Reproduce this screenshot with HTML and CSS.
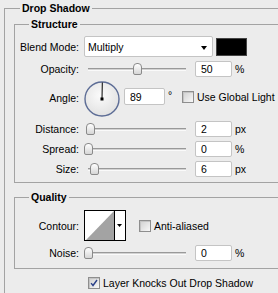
FILE: index.html
```html
<!DOCTYPE html>
<html lang="en">
<head>
  <meta charset="UTF-8"/>
  <meta name="viewport" content="width=device-width,initial-scale=1.0"/>
  <title>Drop Shadow</title>
  <link rel="stylesheet" href="styles.css">
</head>
<body>
  <fieldset class="group">
    <legend>Drop Shadow</legend>

    <fieldset class="box structure">
      <legend>Structure</legend>
      <div class="row tall">
        <span class="lbl">Blend Mode:</span>
        <div class="select">Multiply<span class="caret"></span></div>
        <span class="swatch"></span>
      </div>
      <div class="row">
        <span class="lbl">Opacity:</span>
        <div class="slider"><div class="track"></div><span class="thumb" style="left:49px"></span></div>
        <span class="field">50</span>
        <span class="unit">%</span>
      </div>
      <div class="row angle-row">
        <span class="lbl">Angle:</span>
        <svg class="dial" viewBox="0 0 36 36">
          <defs>
            <radialGradient id="face" cx="45%" cy="40%" r="60%">
              <stop offset="0" stop-color="#fbfbfb"/>
              <stop offset="1" stop-color="#e2e2e2"/>
            </radialGradient>
          </defs>
          <circle cx="18" cy="18" r="17" fill="url(#face)" stroke="#5d6d96" stroke-width="1.4"/>
          <line x1="18" y1="18" x2="18.3" y2="1.5" stroke="#000" stroke-width="1"/>
          <rect x="16.5" y="16.5" width="3" height="3" fill="#000"/>
        </svg>
        <span class="field wide">89</span>
        <span class="deg">°</span>
        <label class="check"><span class="cbox"></span>Use Global Light</label>
      </div>
      <div class="row">
        <span class="lbl">Distance:</span>
        <div class="slider"><div class="track"></div><span class="thumb" style="left:2px"></span></div>
        <span class="field">2</span>
        <span class="unit">px</span>
      </div>
      <div class="row">
        <span class="lbl">Spread:</span>
        <div class="slider"><div class="track"></div><span class="thumb" style="left:0px"></span></div>
        <span class="field">0</span>
        <span class="unit">%</span>
      </div>
      <div class="row">
        <span class="lbl">Size:</span>
        <div class="slider"><div class="track"></div><span class="thumb" style="left:6px"></span></div>
        <span class="field">6</span>
        <span class="unit">px</span>
      </div>
    </fieldset>

    <fieldset class="box quality">
      <legend>Quality</legend>
      <div class="row contour-row">
        <span class="lbl">Contour:</span>
        <svg class="contour" viewBox="0 0 42 31">
          <rect x="0.5" y="0.5" width="41" height="30" fill="#fff" stroke="#000"/>
          <polygon points="2,30 30,1 30,30" fill="#a3a3a3"/>
          <line x1="30.5" y1="0" x2="30.5" y2="31" stroke="#000"/>
          <polygon points="33,14 38,14 35.5,17" fill="#000"/>
        </svg>
        <label class="check aa"><span class="cbox"></span>Anti-aliased</label>
      </div>
      <div class="row">
        <span class="lbl">Noise:</span>
        <div class="slider"><div class="track"></div><span class="thumb" style="left:0px"></span></div>
        <span class="field">0</span>
        <span class="unit">%</span>
      </div>
    </fieldset>

    <label class="check knock">
      <span class="cbox">
        <svg viewBox="0 0 12 12"><path d="M2.5 6.2 L4.8 9 L9.6 2.4" fill="none" stroke="#2b4189" stroke-width="1.7"/></svg>
      </span>Layer Knocks Out Drop Shadow
    </label>
  </fieldset>
</body>
</html>
```

FILE: styles.css
```css
:root {
  --bg: #ececec;
  --line: #a3a3a3;
  --field-border: #c4c4c4;
}
* { box-sizing: border-box; }
body {
  margin: 0; padding: 2px 0 0 4px;
  background: var(--bg); color: #000;
  font: 10.5px 'Liberation Sans', Arial, sans-serif;
  overflow: hidden;
}

fieldset {
  margin: 0; padding: 0; min-width: 0;
  border: 1px solid var(--line);
  border-right: 0;
}
legend {
  padding: 0 2px;
  font-weight: bold;
  line-height: 12px;
}

.group { border-bottom: 0; padding: 0 0 10px 9px; }
.group > legend { margin-left: 6px; }

.box > legend { margin-left: 14px; }
.structure { margin-top: 4px; padding: 6px 0 5px; }
.quality { margin-top: 8px; padding: 7px 0 7px; }

.row {
  display: flex; align-items: center;
  height: 16px;
}
.row + .row { margin-top: 4px; }
.row.tall { height: 21px; }

.lbl {
  flex: none;
  width: 64px; margin-right: 5px;
  text-align: right;
  white-space: nowrap;
}

/* blend mode dropdown */
.select {
  position: relative;
  width: 129px; height: 21px;
  padding-left: 3px;
  display: flex; align-items: center;
  background: #fff;
  border: 1px solid var(--field-border);
  border-radius: 2px;
}
.caret {
  position: absolute; right: 5px; top: 9px;
  border-left: 3.5px solid transparent;
  border-right: 3.5px solid transparent;
  border-top: 4px solid #000;
}
.swatch {
  width: 31px; height: 18px;
  margin-left: 3px;
  background: #000;
  border: 1px solid #444;
}

/* sliders */
.slider {
  position: relative;
  width: 106px; height: 16px;
  padding: 0 4px;
  display: flex; align-items: center;
  flex: none;
}
.track {
  flex: 1; height: 3px;
  background: #d2d2d2;
  border-top: 1px solid #999;
  border-bottom: 1px solid #fafafa;
}
.thumb {
  position: absolute; top: 2px;
  width: 9px; height: 12px;
  background: linear-gradient(#fff, #d6d6d6);
  border: 1px solid #8a8a8a;
  border-radius: 4px 4px 2px 2px;
}

.field {
  flex: none;
  width: 37px; height: 16px;
  margin-left: 5px;
  padding-left: 5px;
  display: flex; align-items: center;
  background: #fff;
  border: 1px solid var(--field-border);
  border-radius: 2px;
}
.field.wide { width: 41px; height: 17px; margin-left: 4px; }
.unit { margin-left: 3px; }

/* angle */
.row.angle-row { height: 36px; align-items: flex-start; }
.angle-row .lbl { margin-top: 11px; }
.dial { width: 36px; height: 36px; flex: none; }
.angle-row .field { margin-top: 7px; }
.deg { margin-left: 3px; width: 14px; margin-top: 8px; }
.angle-row .check { margin-top: 10px; }

/* checkboxes */
.check {
  display: flex; align-items: center;
  gap: 3px;
  white-space: nowrap;
}
.cbox {
  flex: none;
  width: 12px; height: 12px;
  background: linear-gradient(135deg, #d0d0d0, #f8f8f8);
  border: 1px solid #8e8e8e;
  box-shadow: inset 1px 1px 0 #c4c4c4;
}
.cbox svg { display: block; width: 10px; height: 10px; }

/* contour */
.row.contour-row { height: 31px; }
.contour { width: 42px; height: 31px; flex: none; }
.check.aa { margin-left: 13px; }

.knock { margin: 7px 0 0 74px; height: 13px; }
```
